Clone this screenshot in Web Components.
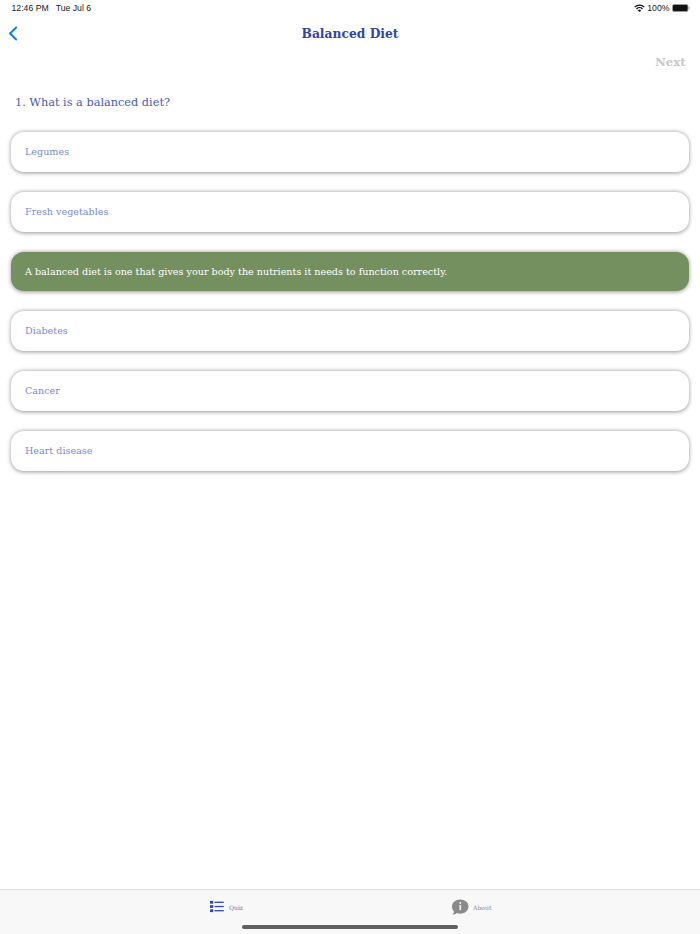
<!DOCTYPE html>
<html>
<head>
<meta charset="utf-8">
<title>Balanced Diet</title>
<style>
html, body { margin: 0; padding: 0; background: #fff; }
body { font-family: "DejaVu Serif", serif; }
</style>
</head>
<body>
<quiz-app>
  <status-bar></status-bar>
  <nav-bar>Balanced Diet</nav-bar>
  <quiz-panel>
    <span slot="question">1. What is a balanced diet?</span>
    <answer-card>Legumes</answer-card>
    <answer-card>Fresh vegetables</answer-card>
    <answer-card correct>A balanced diet is one that gives your body the nutrients it needs to function correctly.</answer-card>
    <answer-card>Diabetes</answer-card>
    <answer-card>Cancer</answer-card>
    <answer-card>Heart disease</answer-card>
  </quiz-panel>
  <tab-bar></tab-bar>
</quiz-app>
<script>
class QuizApp extends HTMLElement {
  constructor() {
    super();
    this.attachShadow({ mode: 'open' });
    this.shadowRoot.innerHTML = `
    <style>
      :host { display: flex; flex-direction: column; width: 700px; height: 934px; overflow: hidden; }
      #main { flex: 1; display: flex; flex-direction: column; min-height: 0; }
    </style>
    <div id="main"><slot></slot></div>
    `;
  }
}

class StatusBar extends HTMLElement {
  constructor() {
    super();
    this.attachShadow({ mode: 'open' });
    this.shadowRoot.innerHTML = `
    <style>
      :host { display: flex; justify-content: space-between; align-items: center; height: 16px; padding: 0 10px 0 11.5px; font: 8.7px/16px "Liberation Sans", sans-serif; color: #222; }
      #left { display: flex; gap: 7px; }
      #right { display: flex; align-items: center; gap: 2.5px; }
      svg { display: block; }
    </style>
    <div id="left"><span>12:46 PM</span><span>Tue Jul 6</span></div>
    <div id="right">
      <svg width="11" height="8" viewBox="0 0 11 8">
        <path d="M.3 2.7a7.3 7.3 0 0 1 10.4 0l-.9.9a6 6 0 0 0-8.6 0z" fill="#111"/>
        <path d="M2.1 4.5a4.8 4.8 0 0 1 6.8 0l-.9.9a3.5 3.5 0 0 0-5 0z" fill="#111"/>
        <path d="M3.9 6.3a2.2 2.2 0 0 1 3.2 0L5.5 7.9z" fill="#111"/>
      </svg>
      <span>100%</span>
      <svg width="18" height="8" viewBox="0 0 18 8">
        <rect x=".5" y=".5" width="15.5" height="7" rx="1.6" fill="#111" stroke="#999"/>
        <path d="M16.8 2.7c.6.2.9.7.9 1.3s-.3 1.100-.9 1.300z" fill="#999"/>
      </svg>
    </div>
    `;
  }
}

class NavBar extends HTMLElement {
  constructor() {
    super();
    this.attachShadow({ mode: 'open' });
    this.shadowRoot.innerHTML = `
    <style>
      :host { display: flex; align-items: center; justify-content: center; position: relative; height: 34px; padding-top: 1px; box-sizing: border-box; font: bold 12.3px/33px "DejaVu Serif", serif; color: #2f45ad; }
      svg { position: absolute; left: 8px; top: 10px; }
    </style>
    <svg width="10" height="15" viewBox="0 0 10 15"><path d="M8.200 1.500 2 7.500l6.200 6" fill="none" stroke="#0a7aff" stroke-width="1.900" stroke-linecap="round" stroke-linejoin="round"/></svg>
    <slot></slot>
    `;
  }
}

class QuizPanel extends HTMLElement {
  constructor() {
    super();
    this.attachShadow({ mode: 'open' });
    this.shadowRoot.innerHTML = `
    <style>
      :host { display: block; flex: 1; }
      #next { text-align: right; padding-right: 14.500px; height: 24px; font: bold 11.600px/24px "DejaVu Serif", serif; color: #c8c8c8; }
      #question { height: 58px; padding: 15px 15px 0; box-sizing: border-box; font: 11.300px/28px "DejaVu Serif", serif; color: #4a5bb8; }
      #list { display: flex; flex-direction: column; gap: 20px; padding: 0 11px; }
    </style>
    <div id="next">Next</div>
    <div id="question"><slot name="question"></slot></div>
    <div id="list"><slot></slot></div>
    `;
  }
}

class AnswerCard extends HTMLElement {
  constructor() {
    super();
    this.attachShadow({ mode: 'open' });
    this.shadowRoot.innerHTML = `
    <style>
      :host { display: flex; align-items: center; height: 39.750px; padding: 0 14px; box-sizing: border-box; border-radius: 13px; background: #fff; color: #7b8bd6; font: 9.600px/1 "DejaVu Serif", serif; box-shadow: 0 .5px 4px rgba(0,0,0,.42); white-space: nowrap; }
      :host([correct]) { background: #75905f; color: #fff; }
    </style>
    <slot></slot>
    `;
  }
}

class TabBar extends HTMLElement {
  constructor() {
    super();
    this.attachShadow({ mode: 'open' });
    this.shadowRoot.innerHTML = `
    <style>
      :host { display: block; height: 45px; box-sizing: border-box; border-top: 1px solid #e0e0e0; background: #f8f8f8; position: relative; }
      #tabs { display: grid; grid-template-columns: 467px 1fr; height: 35px; }
      .tab { display: flex; align-items: center; gap: 5px; font: 6.100px/1 "DejaVu Serif", serif; }
      .tab span { padding-top: 2px; }
      #quiz { color: #5f6fc6; padding-left: 210px; }
      #quiz svg { margin-top: -2px; }
      #about { color: #8c8c8c; margin-left: -16px; gap: 4px; }
      #about svg { margin-top: -1px; }
      svg { display: block; }
      #home { position: absolute; left: 242px; bottom: 5px; width: 216px; height: 4px; border-radius: 2px; background: #5f5f5f; }
    </style>
    <div id="tabs">
      <div class="tab" id="quiz">
        <svg width="14" height="13" viewBox="0 0 15 13" fill="#3448b0">
          <rect x="0" y=".5" width="3.500" height="3"/><rect x="4.800" y="1.300" width="10" height="1.400"/>
          <rect x="0" y="5" width="3.500" height="3"/><rect x="4.800" y="5.800" width="10" height="1.400"/>
          <rect x="0" y="9.500" width="3.500" height="3"/><rect x="4.800" y="10.300" width="10" height="1.400"/>
        </svg>
        <span>Quiz</span>
      </div>
      <div class="tab" id="about">
        <svg width="18" height="17" viewBox="0 0 19 18">
          <path d="M9.800 .5c5 0 8.700 3.300 8.700 7.500s-3.700 7.500-8.700 7.500c-1.300 0-2.500-.2-3.600-.6-1.200 1-2.800 1.700-4.700 1.800 1-.9 1.600-2 1.700-3.200C1.900 12.100 1 10.200 1 8 1 3.800 4.800 .5 9.800 .5z" fill="#8a8a8a"/>
          <circle cx="9.800" cy="4.300" r="1" fill="#f0f0f0"/>
          <rect x="8.900" y="6.300" width="1.800" height="5.500" fill="#f0f0f0"/>
        </svg>
        <span>About</span>
      </div>
    </div>
    <div id="home"></div>
    `;
  }
}

customElements.define('quiz-app', QuizApp);
customElements.define('status-bar', StatusBar);
customElements.define('nav-bar', NavBar);
customElements.define('quiz-panel', QuizPanel);
customElements.define('answer-card', AnswerCard);
customElements.define('tab-bar', TabBar);
</script>
</body>
</html>
